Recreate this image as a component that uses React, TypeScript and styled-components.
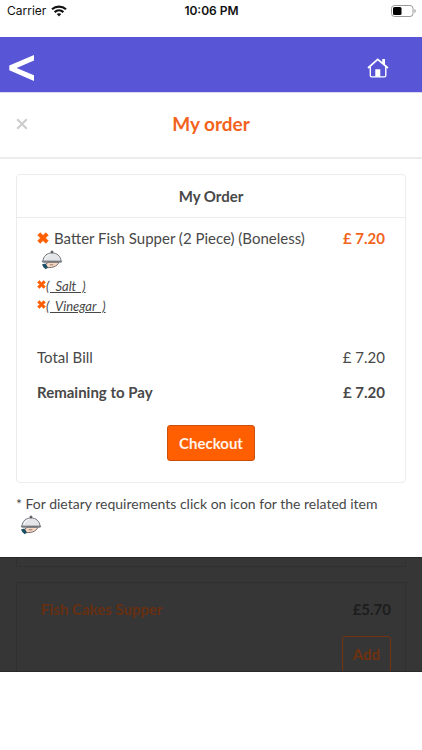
import React from "react";
import styled, { createGlobalStyle, css } from "styled-components";

const ORANGE = "#ff5f00";
const LINE = "#ececec";

const GlobalStyle = createGlobalStyle`
  * { box-sizing: border-box; }
  body { margin: 0; background: #fff; }
  button { font: inherit; cursor: pointer; }
`;

const Screen = styled.div`
  display: flex;
  flex-direction: column;
  height: 100vh;
  overflow: hidden;
  color: #484848;
  font: 400 15px/24px Lato, "Liberation Sans", sans-serif;
`;

const StatusBar = styled.div`
  display: grid;
  grid-template-columns: 1fr auto 1fr;
  align-items: center;
  flex: none;
  height: 37px;
  padding: 0 6px 15px 7px;
  color: #111;
  font: 400 12px/16px Inter, "Liberation Sans", sans-serif;
`;

const Carrier = styled.div`
  display: flex;
  align-items: center;
  gap: 5px;
`;

const Clock = styled.time`
  font-weight: 600;
`;

const Battery = styled.svg`
  justify-self: end;
`;

const NavBar = styled.header`
  display: flex;
  align-items: center;
  justify-content: space-between;
  flex: none;
  height: 56px;
  padding: 7px 33px 0 9px;
  background: #5855d6;
  border-bottom: 1px solid #d8d8f4;
`;

const PlainButton = styled.button`
  display: flex;
  padding: 0;
  border: 0;
  background: none;
  color: inherit;
`;

const Modal = styled.section`
  flex: none;
  background: #fff;
`;

const ModalHeader = styled.div`
  display: grid;
  grid-template-columns: 32px 1fr 32px;
  align-items: center;
  height: 66px;
  padding: 0 16px 2px;
  border-bottom: 2px solid ${LINE};
`;

const ModalTitle = styled.h1`
  margin: 0;
  color: #f2631c;
  font-size: 19px;
  font-weight: 700;
  line-height: 28px;
  text-align: center;
`;

const ModalBody = styled.div`
  padding: 15px 16px 22px;
`;

const Card = styled.div`
  border: 1px solid ${LINE};
  border-radius: 4px;
`;

const CardTitle = styled.h2`
  margin: 0;
  padding: 9px 0;
  border-bottom: 1px solid ${LINE};
  font-size: 15px;
  line-height: 24px;
  text-align: center;
`;

const CardBody = styled.div`
  padding: 8px 20px 21px;
`;

const Row = styled.div<{ $bold?: boolean }>`
  display: flex;
  justify-content: space-between;
  font-weight: ${(p) => (p.$bold ? 700 : 400)};
`;

const ItemName = styled.div`
  display: flex;
  align-items: center;
  gap: 5px;
`;

const Price = styled.strong`
  color: #f2631c;
`;

const DishButton = styled(PlainButton)`
  margin-left: 4px;
`;

const Extras = styled.ul`
  margin: 6px 0 29px;
  padding: 0;
  list-style: none;
`;

const Extra = styled.li`
  display: flex;
  align-items: flex-start;
  height: 20px;
  font-size: 13px;
  font-style: italic;
  line-height: 20px;
  text-decoration: underline;
  white-space: pre;

  button { padding-top: 4px; }
`;

const Totals = styled.div`
  display: flex;
  flex-direction: column;
  gap: 11px;
`;

const Checkout = styled.button`
  display: block;
  margin: 21px auto 0;
  padding: 5px 11px;
  border: 1px solid #c9500c;
  border-radius: 3px;
  background: ${ORANGE};
  color: #fff3ea;
  font-weight: 700;
`;

const Note = styled.p`
  margin: 9px 0 0;
  font-size: 14px;
`;

const NoteIcon = styled(DishButton)`
  margin-top: -1px;
`;

const Backdrop = styled.section`
  flex: 1;
  min-height: 0;
  overflow: hidden;
  padding: 0 16px;
  background: #363636;
  border-top: 1px solid #2a2a2a;
  border-bottom: 1px solid #2a2a2a;
`;

const dimCard = css`
  border: 1px solid #303030;
`;

const PreviousItem = styled.div`
  ${dimCard}
  height: 9px;
  border-top: 0;
`;

const MenuItem = styled.article`
  ${dimCard}
  display: flex;
  flex-direction: column;
  align-items: flex-end;
  gap: 15px;
  margin-top: 15px;
  padding: 14px 14px 14px 24px;
`;

const MenuLine = styled.div`
  display: flex;
  align-self: stretch;
  justify-content: space-between;
  color: #1d1d1d;
  font-weight: 700;
`;

const MenuName = styled.span`
  color: #672f11;
`;

const AddButton = styled.button`
  padding: 5px 10px;
  border: 1px solid #75320f;
  border-radius: 3px;
  background: none;
  color: #70310f;
  font-weight: 700;
`;

const BottomSpace = styled.footer`
  flex: none;
  height: 78px;
`;

function WifiIcon() {
  return (
    <svg width="16" height="12" viewBox="0 0 16 12" aria-hidden="true" fill="none" stroke="#111" strokeWidth="2.2">
      <path d="M1 4.3C5 .7 11 .7 15 4.3" />
      <path d="M3.6 7.1c2.6-2.3 6.2-2.3 8.8 0" />
      <path d="M5.7 9.1c1.4-1.2 3.2-1.2 4.6 0L8 11.5z" fill="#111" stroke="none" />
    </svg>
  );
}

function BatteryIcon() {
  return (
    <Battery width="25" height="12" viewBox="0 0 25 12" role="img" aria-label="Battery">
      <rect x=".5" y=".5" width="21.5" height="11" rx="3" fill="#fff" stroke="#999" />
      <rect x="2" y="2" width="8.5" height="8" rx="1.5" fill="#000" />
      <path d="M23.5 4c1.5.6 1.5 3.4 0 4z" fill="#888" />
    </Battery>
  );
}

function BackIcon() {
  return (
    <svg width="26" height="26" viewBox="0 0 26 26" aria-hidden="true">
      <path d="M25 0v5.6L7.6 12.9 25 20.3V26L.3 15.3v-4.7z" fill="#fff" />
    </svg>
  );
}

function HomeIcon() {
  return (
    <svg width="22" height="20" viewBox="0 0 22 20" aria-hidden="true" fill="none" stroke="#fff">
      <path d="M1 10 10.7 1.4 21 10" strokeWidth="1.7" />
      <path d="M3.3 8.5v9q0 1.4 1.4 1.4h12.7q1.4 0 1.4-1.4v-9" strokeWidth="1.4" />
      <path d="M15.2 1h2.8v6.4l-2.8-2.5zM8.3 11.3h5v7.5h-5z" fill="#fff" stroke="none" />
    </svg>
  );
}

function CrossIcon({ size }: { size: number }) {
  return (
    <svg width={size} height={size} viewBox="0 0 12 12" aria-hidden="true">
      <path d="M3.2.8 6 3.6 8.8.8l2.4 2.4L8.4 6l2.8 2.8-2.4 2.4L6 8.4l-2.8 2.8L.8 8.8 3.6 6 .8 3.2z" fill={ORANGE} stroke={ORANGE} strokeWidth=".8" strokeLinejoin="round" />
    </svg>
  );
}

function CloseIcon() {
  return (
    <svg width="12" height="12" viewBox="0 0 12 12" aria-hidden="true">
      <path d="m1.3 1.3 9.4 9.4m0-9.4-9.4 9.4" stroke="#ccc" strokeWidth="2.1" />
    </svg>
  );
}

function DishIcon() {
  return (
    <svg width="22" height="20" viewBox="0 0 22 20" aria-hidden="true">
      <path d="M4.8 14.2c1.5-1.8 3-2.2 5.5-2.2h6.6c1 .6.6 1.7-.5 2.6-2.3 2.2-4.9 3.1-8.1 2.9l-2 .3z" fill="#f9d8c4" stroke="#3f3634" strokeWidth=".7" />
      <path d="M8.8 14.8h3.6" stroke="#4a3b38" strokeWidth=".6" />
      <path d="m1 14.6 3.3-1 2.6 4-2.2 1.6Q2 17.800 1 14.600z" fill="#1b4d63" />
      <path d="M1.900 11.200C2.300 6 6.200 2.900 11 2.900s8.700 3.100 9.100 8.300z" fill="#e3e5e8" stroke="#555961" strokeWidth=".8" />
      <path d="M4 9.600c.800-2.900 2.700-4.600 5.200-5.200" fill="none" stroke="#fafafa" />
      <circle cx="11" cy="1.900" r="1" fill="#888" stroke="#333" strokeWidth=".7" />
      <path d="M.9 11.400h20.200l-1.300 1H2.200z" fill="#b9bec4" stroke="#45484e" strokeWidth=".5" />
    </svg>
  );
}

const extras = ["Salt", "Vinegar"];

export default function App() {
  return (
    <>
      <GlobalStyle />
      <Screen>
        <StatusBar>
          <Carrier>Carrier <WifiIcon /></Carrier>
          <Clock>10:06 PM</Clock>
          <BatteryIcon />
        </StatusBar>
        <NavBar>
          <PlainButton aria-label="Back"><BackIcon /></PlainButton>
          <PlainButton aria-label="Home"><HomeIcon /></PlainButton>
        </NavBar>
        <Modal>
          <ModalHeader>
            <PlainButton aria-label="Close"><CloseIcon /></PlainButton>
            <ModalTitle>My order</ModalTitle>
          </ModalHeader>
          <ModalBody>
            <Card>
              <CardTitle>My Order</CardTitle>
              <CardBody>
                <Row>
                  <ItemName>
                    <PlainButton aria-label="Remove item"><CrossIcon size={12} /></PlainButton>
                    Batter Fish Supper (2 Piece) (Boneless)
                  </ItemName>
                  <Price>£ 7.20</Price>
                </Row>
                <DishButton aria-label="Dietary requirements"><DishIcon /></DishButton>
                <Extras>
                  {extras.map((name) => (
                    <Extra key={name}>
                      <PlainButton aria-label={`Remove ${name}`}><CrossIcon size={9} /></PlainButton>
                      <span>{`(  ${name}  )`}</span>
                    </Extra>
                  ))}
                </Extras>
                <Totals>
                  <Row><span>Total Bill</span><span>£ 7.20</span></Row>
                  <Row $bold><span>Remaining to Pay</span><span>£ 7.20</span></Row>
                </Totals>
                <Checkout>Checkout</Checkout>
              </CardBody>
            </Card>
            <Note>* For dietary requirements click on icon for the related item</Note>
            <NoteIcon aria-label="Dietary requirements"><DishIcon /></NoteIcon>
          </ModalBody>
        </Modal>
        <Backdrop>
          <PreviousItem />
          <MenuItem>
            <MenuLine><MenuName>Fish Cakes Supper</MenuName><span>£5.70</span></MenuLine>
            <AddButton>Add</AddButton>
          </MenuItem>
        </Backdrop>
        <BottomSpace />
      </Screen>
    </>
  );
}
